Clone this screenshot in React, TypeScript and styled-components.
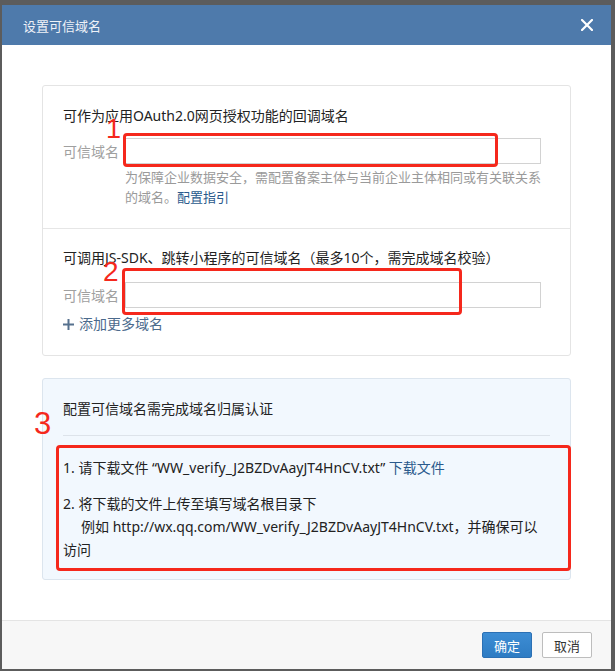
import React from "react";
import styled, {createGlobalStyle} from "styled-components";

const GlobalStyle = createGlobalStyle`
  html, body {
    margin: 0;
    padding: 0;
    background: #5c5c5c;
  }
  body {
    font-family: "Noto Sans", "Noto Sans CJK SC", sans-serif;
    color: #222;
  }
  * {
    box-sizing: border-box;
  }
`;

const CloseIcon = () => (
  <svg width="12" height="12" viewBox="0 0 12 12">
    <path d="M1 1 L11 11 M11 1 L1 11" stroke="#fff" strokeWidth="2.2" strokeLinecap="square"/>
  </svg>
);

const PlusIcon = () => (
  <svg width="11" height="11" viewBox="0 0 11 11">
    <path d="M5.5 0 V11 M0 5.5 H11" stroke="#56718e" strokeWidth="2"/>
  </svg>
);

const App: React.FC = () => {
  return (
    <Page>
      <GlobalStyle/>
      <Dialog>
        <Header>
          <HeaderTitle>设置可信域名</HeaderTitle>
          <CloseButton aria-label="关闭">
            <CloseIcon/>
          </CloseButton>
        </Header>

        <Body>
          <DomainCard>
            <Section>
              <SectionTitle>可作为应用OAuth2.0网页授权功能的回调域名</SectionTitle>
              <Row>
                <Label>可信域名</Label>
                <Input/>
              </Row>
              <Hint>
                <HintLine>为保障企业数据安全，需配置备案主体与当前企业主体相同或有关联关系</HintLine>
                <HintLine>的域名。<Link>配置指引</Link></HintLine>
              </Hint>
            </Section>
            <Section>
              <SectionTitle>可调用JS-SDK、跳转小程序的可信域名（最多10个，需完成域名校验）</SectionTitle>
              <Row $gap={14}>
                <Label>可信域名</Label>
                <Input/>
              </Row>
              <AddMore>
                <PlusIcon/>
                <span>添加更多域名</span>
              </AddMore>
            </Section>
          </DomainCard>

          <VerifyCard>
            <VerifyTitle>配置可信域名需完成域名归属认证</VerifyTitle>
            <Divider/>
            <Step>
              1. 请下载文件 “WW_verify_J2BZDvAayJT4HnCV.txt” <Link>下载文件</Link>
            </Step>
            <Step $spaced>2. 将下载的文件上传至填写域名根目录下</Step>
            <Step $indent>例如 http://wx.qq.com/WW_verify_J2BZDvAayJT4HnCV.txt，并确保可以</Step>
            <Step>访问</Step>
          </VerifyCard>
        </Body>

        <Footer>
          <Button $primary>确定</Button>
          <Button>取消</Button>
        </Footer>
      </Dialog>

      <MarkBox $x={123} $y={133} $w={375} $h={34}/>
      <MarkNumber $x={106} $y={116} $size={27}>1</MarkNumber>
      <MarkBox $x={122} $y={268} $w={340} $h={47}/>
      <MarkNumber $x={103} $y={258} $size={28}>2</MarkNumber>
      <MarkBox $x={56} $y={445} $w={515} $h={126}/>
      <MarkNumber $x={34} $y={408} $size={31}>3</MarkNumber>
    </Page>
  );
};

const Page = styled.div`
  position: relative;
  width: 615px;
  height: 671px;
  padding: 5px 4px 2px 2px;
  background: #5c5c5c;
`;

const Dialog = styled.div`
  width: 609px;
  height: 664px;
  display: flex;
  flex-direction: column;
  background: #fff;
`;

const Header = styled.div`
  height: 40px;
  flex-shrink: 0;
  display: flex;
  align-items: center;
  justify-content: space-between;
  padding: 0 18px 0 21px;
  background: #4e7aab;
`;

const HeaderTitle = styled.div`
  font-family: "Noto Sans CJK SC", sans-serif;
  font-size: 13px;
  color: #eef2f8;
`;

const CloseButton = styled.button`
  display: flex;
  align-items: center;
  justify-content: center;
  padding: 0;
  border: none;
  background: transparent;
`;

const Body = styled.div`
  flex: 1;
  padding: 40px 40px 0;
`;

const DomainCard = styled.div`
  border: 1px solid #e4e4e4;
  border-radius: 3px;
  background: #fff;
`;

const Section = styled.div`
  padding: 20px 20px 21px;

  & + & {
    border-top: 1px solid #e6e6e6;
    padding-top: 19px;
  }
`;

const SectionTitle = styled.div`
  font-size: 14px;
  line-height: 20px;
  color: #222;
`;

const Row = styled.div<{ $gap?: number }>`
  display: flex;
  align-items: center;
  margin-top: ${({$gap}) => $gap ?? 12}px;
`;

const Label = styled.div`
  width: 62px;
  font-family: "Noto Sans CJK SC", sans-serif;
  font-size: 14px;
  color: #a0a0a0;
`;

const Input = styled.input`
  width: 416px;
  height: 26px;
  border: 1px solid #d2d2d2;
  border-radius: 0;
  outline: none;
  background: #fff;
`;

const Hint = styled.div`
  margin: 3px 0 0 62px;
  font-size: 13px;
  line-height: 20px;
  color: #9a9a9a;
`;

const HintLine = styled.div`
  white-space: nowrap;
`;

const Link = styled.a`
  color: #2a5a8c;
  cursor: pointer;
`;

const AddMore = styled.div`
  display: flex;
  align-items: center;
  gap: 5px;
  margin-top: 6px;
  font-size: 14px;
  line-height: 20px;
  color: #4b6a8c;
`;

const VerifyCard = styled.div`
  margin-top: 22px;
  padding: 20px 20px 18px;
  border: 1px solid #dce5ee;
  border-radius: 3px;
  background: #f2f8fe;
`;

const VerifyTitle = styled.div`
  font-size: 14px;
  line-height: 20px;
  color: #222;
`;

const Divider = styled.div`
  margin: 16px 0 20px;
  border-top: 1px solid #dde3ea;
`;

const Step = styled.div<{ $spaced?: boolean; $indent?: boolean }>`
  font-size: 14px;
  line-height: 23px;
  color: #222;
  white-space: nowrap;
  margin-top: ${({$spaced}) => ($spaced ? 13 : 0)}px;
  padding-left: ${({$indent}) => ($indent ? 18 : 0)}px;
`;

const Footer = styled.div`
  height: 49px;
  flex-shrink: 0;
  display: flex;
  justify-content: flex-end;
  gap: 10px;
  padding: 11px 19px 0;
  border-top: 1px solid #e4e4e4;
  background: #f7f7f7;
`;

const Button = styled.button<{ $primary?: boolean }>`
  width: 50px;
  height: 26px;
  padding: 0;
  border-radius: 2px;
  font-family: "Noto Sans CJK SC", sans-serif;
  font-size: 13px;
  border: 1px solid ${({$primary}) => ($primary ? "#2b70b4" : "#bdbdbd")};
  background: ${({$primary}) => ($primary ? "linear-gradient(#3d8dd4, #2e7cc3)" : "#fff")};
  color: ${({$primary}) => ($primary ? "#fff" : "#333")};
`;

const MarkBox = styled.div<{ $x: number; $y: number; $w: number; $h: number }>`
  position: absolute;
  left: ${({$x}) => $x}px;
  top: ${({$y}) => $y}px;
  width: ${({$w}) => $w}px;
  height: ${({$h}) => $h}px;
  border: 3px solid #f5281c;
  border-radius: 4px;
  pointer-events: none;
`;

const MarkNumber = styled.div<{ $x: number; $y: number; $size: number }>`
  position: absolute;
  left: ${({$x}) => $x}px;
  top: ${({$y}) => $y}px;
  font-family: "Liberation Sans", sans-serif;
  font-size: ${({$size}) => $size}px;
  line-height: 1;
  color: #f5281c;
`;

export default App;
